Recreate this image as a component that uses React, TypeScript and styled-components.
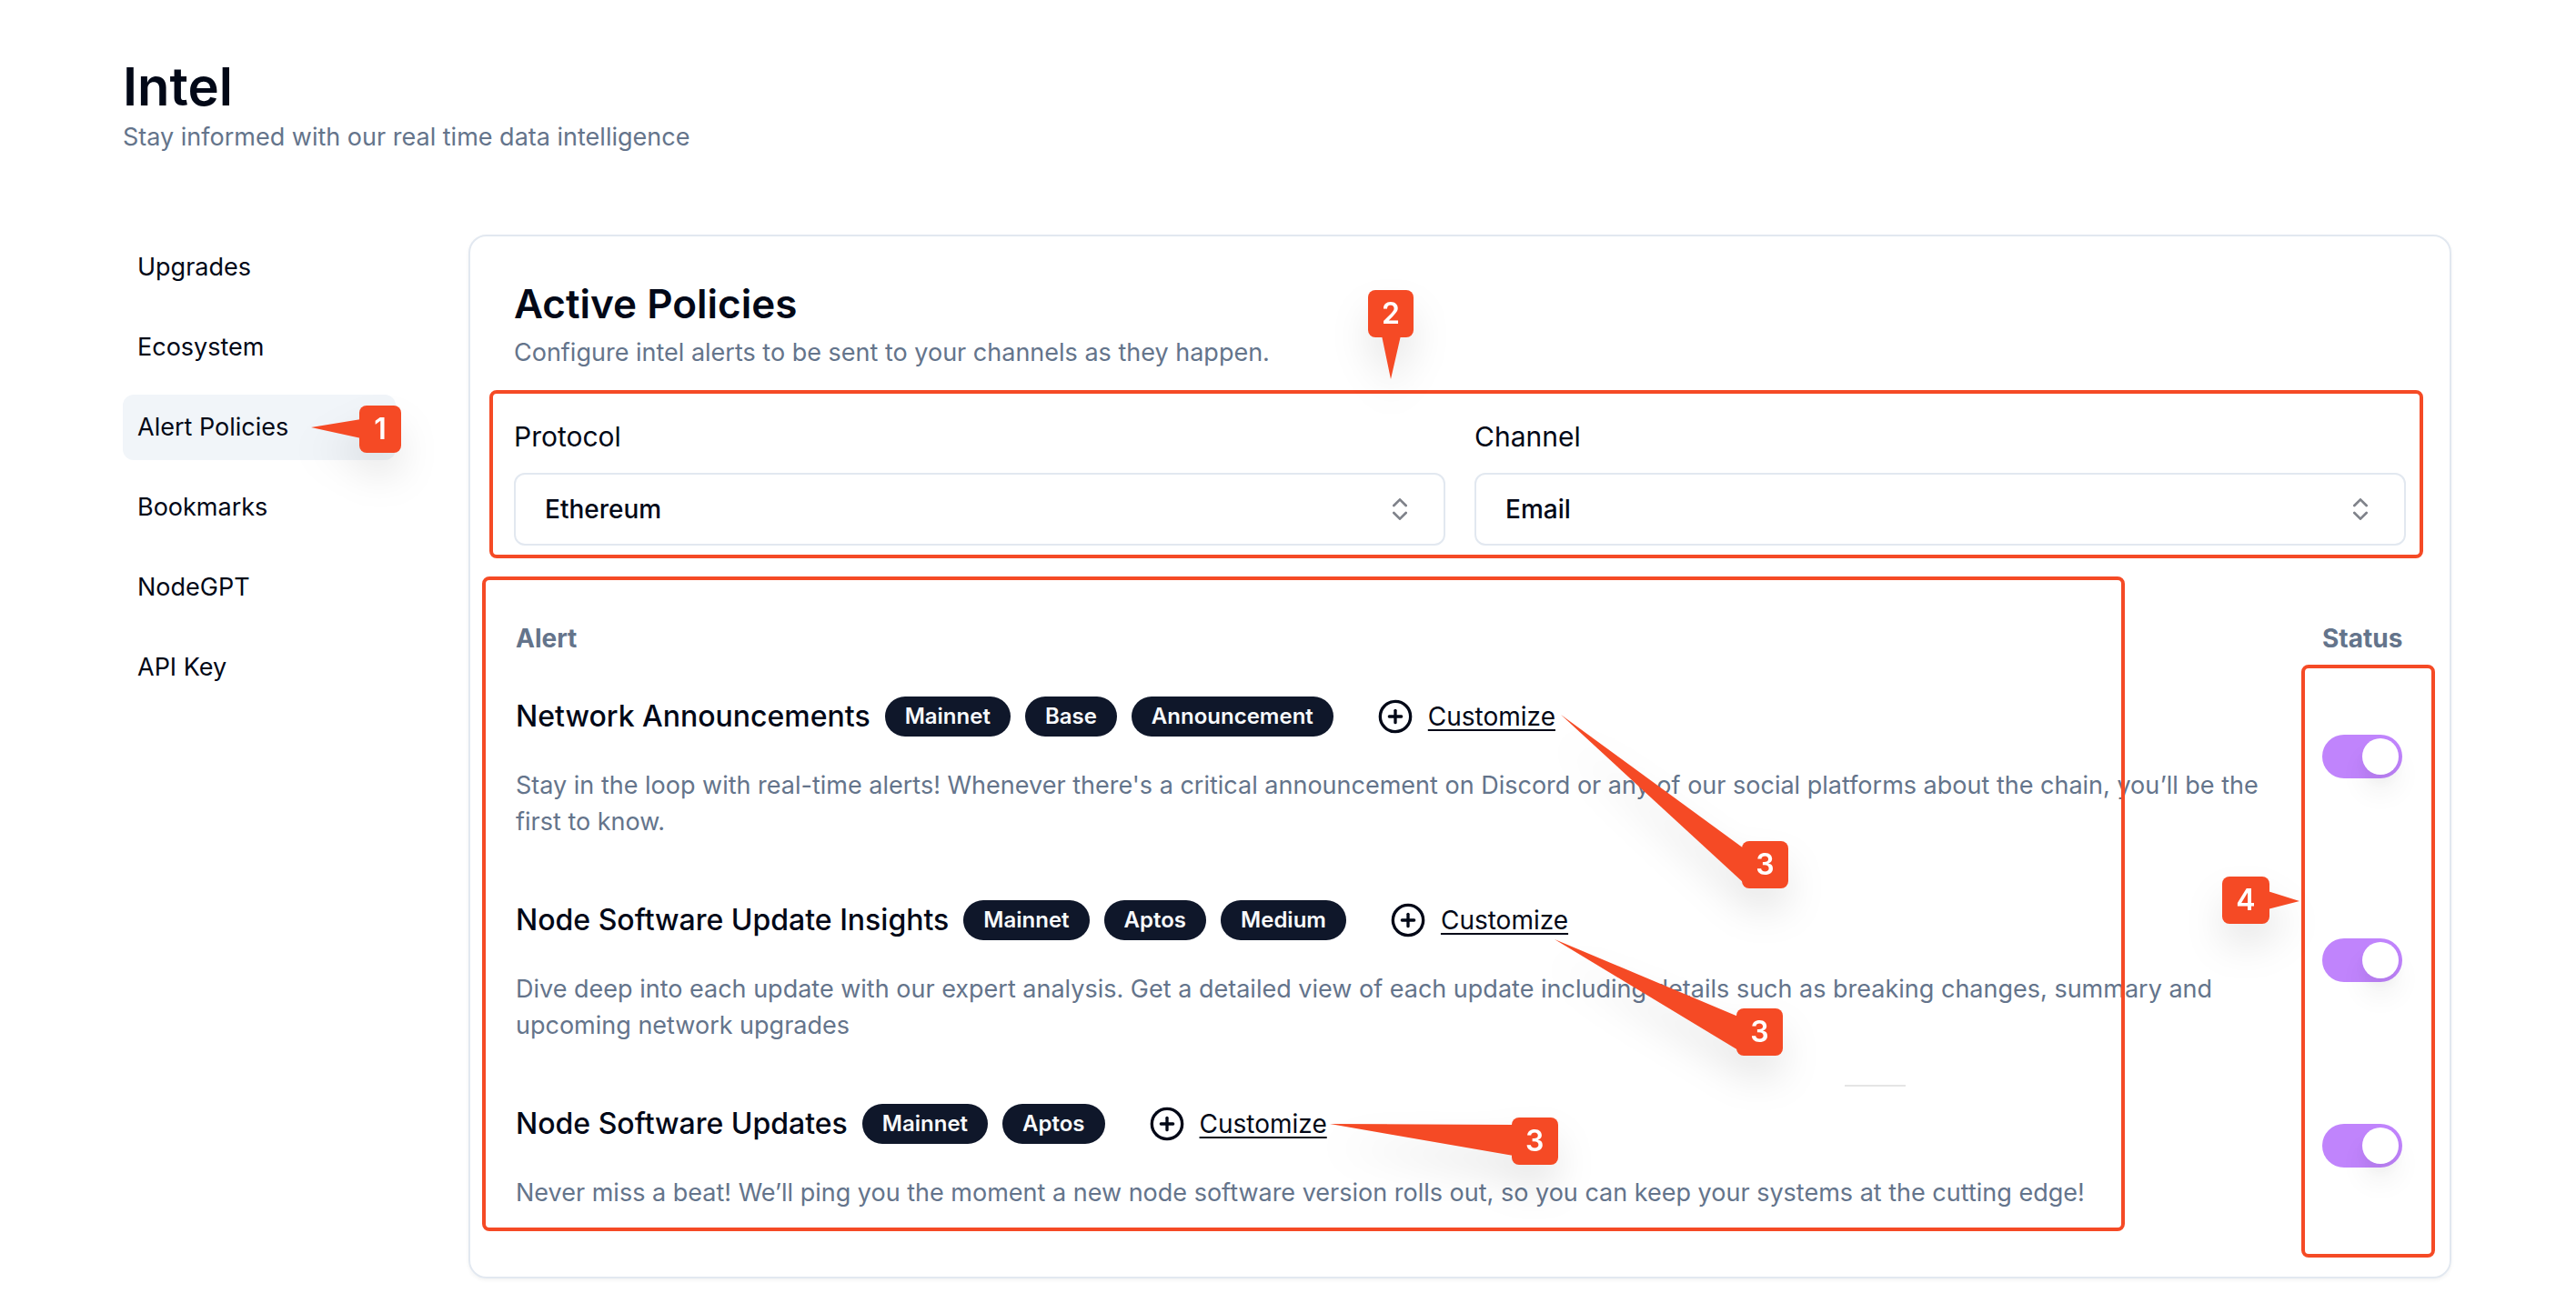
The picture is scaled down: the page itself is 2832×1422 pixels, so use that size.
import React, { useState } from "react";
import styled, { createGlobalStyle } from "styled-components";
import { ChevronsUpDown, CirclePlus } from "lucide-react";

const ink = "#020817";
const muted = "#64748b";
const line = "#e2e8f0";
const accent = "#f54a25";

const GlobalStyle = createGlobalStyle`
  *, *::before, *::after { box-sizing: border-box; }
  body {
    margin: 0;
    background: #ffffff;
    color: ${ink};
    font-family: Inter, "Liberation Sans", sans-serif;
    font-size: 27px;
    line-height: 40px;
  }
  h1, h2, h3, p, ul { margin: 0; padding: 0; }
`;

const Page = styled.main`
  padding: 59px 137px 16px 135px;
`;

const PageTitle = styled.h1`
  font-size: 58px;
  line-height: 72px;
  font-weight: 600;
`;

const Muted = styled.p`
  color: ${muted};
`;

const Columns = styled.div`
  display: grid;
  grid-template-columns: 300px minmax(0, 1fr);
  gap: 80px;
  align-items: start;
  margin-top: 87px;
`;

const NavList = styled.ul`
  display: flex;
  flex-direction: column;
  gap: 16px;
  list-style: none;
`;

const NavItem = styled.li`
  position: relative;
`;

const NavLink = styled.a<{ $active?: boolean }>`
  display: block;
  padding: 16px;
  border-radius: 12px;
  color: ${ink};
  text-decoration: none;
  background: ${(p) => (p.$active ? "#f1f5f9" : "transparent")};
`;

const Card = styled.section`
  padding: 48px 48px 52px;
  border: 2px solid ${line};
  border-radius: 20px;
  box-shadow: 0 2px 4px rgba(0, 0, 0, 0.05);
`;

const CardTitle = styled.h2`
  margin-bottom: 8px;
  font-size: 44px;
  line-height: 52px;
  font-weight: 600;
`;

const Filters = styled.div`
  position: relative;
  display: grid;
  grid-template-columns: 1fr 1fr;
  gap: 32px;
  margin-top: 52px;
`;

const Field = styled.div`
  display: flex;
  flex-direction: column;
  gap: 20px;
`;

const FieldLabel = styled.label`
  font-size: 30px;
`;

const SelectWrap = styled.div`
  position: relative;
  display: grid;

  svg {
    position: absolute;
    right: 34px;
    top: 24px;
    opacity: 0.5;
    pointer-events: none;
  }
`;

const Select = styled.select`
  appearance: none;
  height: 80px;
  padding: 0 32px;
  border: 2px solid ${line};
  border-radius: 12px;
  background: transparent;
  color: ${ink};
  font: inherit;
  font-size: 28px;
  font-weight: 500;
`;

const TableArea = styled.div`
  position: relative;
  margin-top: 84px;
`;

const Table = styled.table`
  width: 100%;
  border-collapse: collapse;
`;

const HeadCell = styled.th`
  padding: 0 2px;
  color: ${muted};
  font-size: 28px;
  font-weight: 700;
  line-height: 36px;
  text-align: left;
`;

const AlertCell = styled.td`
  padding: 28px 16px 20px 2px;
  vertical-align: top;
`;

const StatusCell = styled.td`
  width: 94px;
  padding: 0 2px;
  vertical-align: middle;
`;

const AlertHeading = styled.div`
  display: flex;
  align-items: center;
  gap: 16px;
  height: 80px;
  margin-bottom: 16px;
`;

const AlertName = styled.h3`
  font-size: 32px;
  font-weight: 500;
`;

const Badge = styled.span`
  padding: 0 22px;
  border-radius: 22px;
  background: #0f172a;
  color: #f8fafc;
  font-size: 24px;
  line-height: 44px;
  font-weight: 600;
`;

const CustomizeWrap = styled.span`
  position: relative;
  margin-left: 32px;
`;

const CustomizeButton = styled.button`
  display: flex;
  align-items: center;
  gap: 16px;
  padding: 0;
  border: 0;
  background: none;
  color: ${ink};
  font: inherit;
  font-size: 28px;
  text-decoration: underline;
  text-underline-offset: 4px;
  text-decoration-thickness: 2px;
  cursor: pointer;
`;

const Switch = styled.input`
  appearance: none;
  display: block;
  width: 88px;
  height: 48px;
  margin: 0;
  padding: 4px;
  border-radius: 24px;
  background: ${line};
  cursor: pointer;

  &::before {
    content: "";
    display: block;
    width: 40px;
    height: 40px;
    border-radius: 50%;
    background: #ffffff;
    box-shadow: 0 20px 30px rgba(0, 0, 0, 0.06), 0 8px 12px rgba(0, 0, 0, 0.03);
  }
  &:checked { background: #c084fc; }
  &:checked::before { margin-left: 40px; }
`;

const Outline = styled.div<{ $top: number; $right: number; $bottom: number; $left?: number; $width?: number }>`
  position: absolute;
  top: ${(p) => p.$top}px;
  right: ${(p) => p.$right}px;
  bottom: ${(p) => p.$bottom}px;
  ${(p) => (p.$left !== undefined ? `left: ${p.$left}px;` : "")}
  ${(p) => (p.$width !== undefined ? `width: ${p.$width}px;` : "")}
  border: 4px solid ${accent};
  border-radius: 8px;
  pointer-events: none;
`;

const CalloutBox = styled.div<{ $top: number; $left?: number; $right?: number; $width: number }>`
  position: absolute;
  z-index: 1;
  top: ${(p) => p.$top}px;
  ${(p) => (p.$left !== undefined ? `left: ${p.$left}px;` : "")}
  ${(p) => (p.$right !== undefined ? `right: ${p.$right}px;` : "")}
  width: ${(p) => p.$width}px;
  filter: drop-shadow(0 24px 20px rgba(0, 0, 0, 0.09));
  pointer-events: none;

  svg {
    position: absolute;
    inset: 0;
    overflow: visible;
    fill: ${accent};
  }
`;

const CalloutLabel = styled.span`
  position: relative;
  display: block;
  border-radius: 8px;
  background: ${accent};
  color: #ffffff;
  font-size: 32px;
  line-height: 52px;
  font-weight: 600;
  text-align: center;
`;

const StrayRule = styled.div`
  position: absolute;
  top: 509px;
  right: 550px;
  width: 67px;
  height: 2px;
  background: #e5e5e5;
`;

type CalloutProps = { label: string; top: number; left?: number; right?: number; width?: number; points: string };

function Callout({ label, top, left, right, width = 51, points }: CalloutProps) {
  return (
    <CalloutBox $top={top} $left={left} $right={right} $width={width}>
      <svg width={width} height={52} aria-hidden="true">
        <polygon points={points} />
      </svg>
      <CalloutLabel>{label}</CalloutLabel>
    </CalloutBox>
  );
}

const navItems = ["Upgrades", "Ecosystem", "Alert Policies", "Bookmarks", "NodeGPT", "API Key"];

const alerts = [
  {
    name: "Network Announcements",
    tags: ["Mainnet", "Base", "Announcement"],
    text: "Stay in the loop with real-time alerts! Whenever there's a critical announcement on Discord or any of our social platforms about the chain, you’ll be the first to know.",
    callout: { top: 157, left: 401, points: "-199,-139 2,8 2,46" },
  },
  {
    name: "Node Software Update Insights",
    tags: ["Mainnet", "Aptos", "Medium"],
    text: "Dive deep into each update with our expert analysis. Get a detailed view of each update including details such as breaking changes, summary and upcoming network upgrades",
    callout: { top: 117, left: 381, points: "-200,-76 2,9 2,46" },
  },
  {
    name: "Node Software Updates",
    tags: ["Mainnet", "Aptos"],
    text: "Never miss a beat! We’ll ping you the moment a new node software version rolls out, so you can keep your systems at the cutting edge!",
    callout: { top: 13, left: 399, points: "-200,7 2,8 2,42" },
  },
];

export default function App() {
  const [enabled, setEnabled] = useState([true, true, true]);
  const toggle = (index: number) => setEnabled(enabled.map((on, i) => (i === index ? !on : on)));

  return (
    <>
      <GlobalStyle />
      <Page>
        <header>
          <PageTitle>Intel</PageTitle>
          <Muted>Stay informed with our real time data intelligence</Muted>
        </header>
        <Columns>
          <nav aria-label="Intel sections">
            <NavList>
              {navItems.map((item) => {
                const active = item === "Alert Policies";
                return (
                  <NavItem key={item}>
                    <NavLink href="#" $active={active} aria-current={active ? "page" : undefined}>
                      {item}
                    </NavLink>
                    {active && <Callout label="1" top={12} left={260} width={46} points="-53,24 2,15 2,36" />}
                  </NavItem>
                );
              })}
            </NavList>
          </nav>
          <Card>
            <CardTitle>Active Policies</CardTitle>
            <Muted>Configure intel alerts to be sent to your channels as they happen.</Muted>
            <Filters>
              <Field>
                <FieldLabel htmlFor="protocol">Protocol</FieldLabel>
                <SelectWrap>
                  <Select id="protocol" defaultValue="Ethereum">
                    <option>Ethereum</option>
                  </Select>
                  <ChevronsUpDown size={32} aria-hidden="true" />
                </SelectWrap>
              </Field>
              <Field>
                <FieldLabel htmlFor="channel">Channel</FieldLabel>
                <SelectWrap>
                  <Select id="channel" defaultValue="Email">
                    <option>Email</option>
                  </Select>
                  <ChevronsUpDown size={32} aria-hidden="true" />
                </SelectWrap>
              </Field>
              <Outline $top={-31} $right={-19} $bottom={-14} $left={-27} />
              <Callout label="2" top={-141} right={1091} width={50} points="25,98 15,50 36,50" />
            </Filters>
            <TableArea>
              <Table>
                <thead>
                  <tr>
                    <HeadCell scope="col">Alert</HeadCell>
                    <HeadCell scope="col">Status</HeadCell>
                  </tr>
                </thead>
                <tbody>
                  {alerts.map((alert, index) => (
                    <tr key={alert.name}>
                      <AlertCell>
                        <AlertHeading>
                          <AlertName>{alert.name}</AlertName>
                          {alert.tags.map((tag) => (
                            <Badge key={tag}>{tag}</Badge>
                          ))}
                          <CustomizeWrap>
                            <CustomizeButton type="button">
                              <CirclePlus size={40} aria-hidden="true" />
                              Customize
                            </CustomizeButton>
                            <Callout label="3" {...alert.callout} />
                          </CustomizeWrap>
                        </AlertHeading>
                        <Muted>{alert.text}</Muted>
                      </AlertCell>
                      <StatusCell>
                        <Switch
                          type="checkbox"
                          role="switch"
                          aria-label={alert.name}
                          checked={enabled[index]}
                          onChange={() => toggle(index)}
                        />
                      </StatusCell>
                    </tr>
                  ))}
                </tbody>
              </Table>
              <StrayRule />
              <Outline $top={-50} $right={309} $bottom={-2} $left={-35} />
              <Outline $top={47} $right={-32} $bottom={-31} $width={147} />
              <Callout label="4" top={280} right={150} width={52} points="85,27 50,16 50,36" />
            </TableArea>
          </Card>
        </Columns>
      </Page>
    </>
  );
}
